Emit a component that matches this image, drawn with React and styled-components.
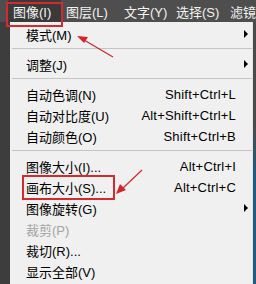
import styled, { createGlobalStyle } from "styled-components";

const GlobalStyle = createGlobalStyle`
    html, body {
        margin: 0;
        padding: 0;
        background: #f0f0f0;
    }
`

const topItems = [
    { label: "图像(I)", width: 53, active: true },
    { label: "图层(L)", width: 58 },
    { label: "文字(Y)", width: 52 },
    { label: "选择(S)", width: 54 },
    { label: "滤镜", width: 40 },
];

const menu = [
    { label: "模式(M)", sub: true },
    { sep: true },
    { label: "调整(J)", sub: true },
    { sep: true },
    { label: "自动色调(N)", key: "Shift+Ctrl+L" },
    { label: "自动对比度(U)", key: "Alt+Shift+Ctrl+L" },
    { label: "自动颜色(O)", key: "Shift+Ctrl+B" },
    { sep: true },
    { label: "图像大小(I)...", key: "Alt+Ctrl+I" },
    { label: "画布大小(S)...", key: "Alt+Ctrl+C" },
    { label: "图像旋转(G)", sub: true },
    { label: "裁剪(P)", disabled: true },
    { label: "裁切(R)..." },
    { label: "显示全部(V)" },
];

function App() {
    return (
        <Screen>
            <GlobalStyle />
            <MenuBar>
                {topItems.map((t) => (
                    <TopItem key={t.label} $w={t.width} $active={t.active}>{t.label}</TopItem>
                ))}
            </MenuBar>
            <Body>
                <LeftStrip />
                <Dropdown>
                    {menu.map((m, i) =>
                        m.sep ? (
                            <Separator key={i} />
                        ) : (
                            <Row key={i} $disabled={m.disabled}>
                                <Label>{m.label}</Label>
                                {m.key && <Shortcut>{m.key}</Shortcut>}
                                {m.sub && <SubArrow />}
                            </Row>
                        )
                    )}
                </Dropdown>
                <RightStrip />
            </Body>

            <RedBox $x={6} $y={2} $w={57} $h={25} />
            <RedBox $x={22} $y={175} $w={93} $h={25} />

            <Arrows width="256" height="284" viewBox="0 0 256 284">
                <line x1="113" y1="57" x2="84" y2="40" stroke="#d0262b" strokeWidth="1.2" />
                <polygon points="77,36 88,37 84,43" fill="#d0262b" />
                <line x1="142" y1="170" x2="122" y2="189" stroke="#d0262b" strokeWidth="1.2" />
                <polygon points="116,194 120,184 126,190" fill="#d0262b" />
            </Arrows>
        </Screen>
    );
}

const Screen = styled.div`
    position: relative;
    width: 256px;
    height: 284px;
    overflow: hidden;
    background: #f0f0f0;
    font-family: "Liberation Sans", "Noto Sans CJK SC", sans-serif;
`

const MenuBar = styled.div`
    display: flex;
    height: 22px;
    padding-left: 8px;
    background: #4e4e4e;
    color: #f2f2f2;
    font-size: 13px;
`

const TopItem = styled.div`
    flex: none;
    width: ${(p) => p.$w}px;
    display: flex;
    align-items: center;
    padding-left: 5px;
    box-sizing: border-box;
    background: ${(p) => (p.$active ? "#3a3a3a" : "transparent")};
    white-space: nowrap;
`

const Body = styled.div`
    display: flex;
    height: 262px;
`

const LeftStrip = styled.div`
    width: 10px;
    background: #3d3d3d;
`

const RightStrip = styled.div`
    width: 3px;
    background: linear-gradient(#4a4a4a, #4a4a4a 40%, #1e5c82 60%);
`

const Dropdown = styled.div`
    flex: 1;
    padding-top: 2px;
    background: #f0f0f0;
    border-right: 1px solid #e4e4e4;
`

const Row = styled.div`
    position: relative;
    display: flex;
    align-items: center;
    height: 21px;
    padding: 0 7px 0 16px;
    font-size: 13px;
    color: ${(p) => (p.$disabled ? "#a3a3a3" : "#000")};
`

const Label = styled.span`
    flex: 1;
    white-space: nowrap;
`

const Shortcut = styled.span`
    white-space: nowrap;
    margin-right: 9px;
    letter-spacing: 0.2px;
`

const SubArrow = styled.span`
    position: absolute;
    right: 4px;
    top: 6px;
    width: 0;
    height: 0;
    border-top: 4px solid transparent;
    border-bottom: 4px solid transparent;
    border-left: 4px solid #000;
`

const Separator = styled.div`
    height: 9px;
    position: relative;
    &::after {
        content: "";
        position: absolute;
        left: 2px;
        right: 0;
        top: 3px;
        border-top: 1px solid #c4c4c4;
    }
`

const RedBox = styled.div`
    position: absolute;
    left: ${(p) => p.$x}px;
    top: ${(p) => p.$y}px;
    width: ${(p) => p.$w}px;
    height: ${(p) => p.$h}px;
    border: 2px solid #d22a2f;
    box-sizing: border-box;
`

const Arrows = styled.svg`
    position: absolute;
    left: 0;
    top: 0;
    pointer-events: none;
`

export default App;
